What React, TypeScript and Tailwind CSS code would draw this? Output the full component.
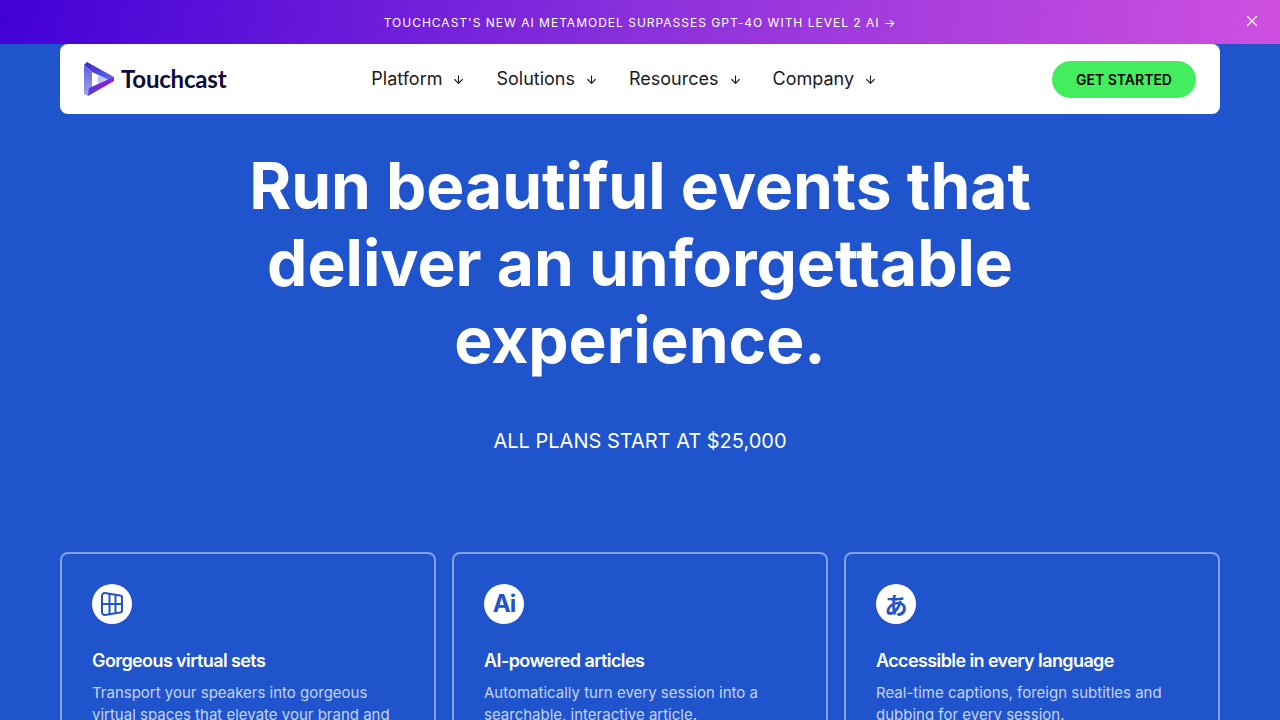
import { ArrowDown, X } from "lucide-react";

const NAV_ITEMS = ["Platform", "Solutions", "Resources", "Company"];

const CARDS = [
  {
    title: "Gorgeous virtual sets",
    body: "Transport your speakers into gorgeous virtual spaces that elevate your brand and",
    icon: (
      <svg width="22" height="24" viewBox="0 0 22 24" fill="none" stroke="#2054cc" strokeWidth="2" strokeLinejoin="round">
        <path d="M1 3.500a2.500 2.500 0 0 1 2.800-2.400l15.400 2.500a2 2 0 0 1 1.800 2v12.800a2 2 0 0 1-1.800 2L3.800 22.900A2.500 2.500 0 0 1 1 20.500z" />
        <path d="M1 12h20M8.500 2v20M14.500 3v18" />
      </svg>
    ),
  },
  {
    title: "AI-powered articles",
    body: "Automatically turn every session into a searchable, interactive article.",
    icon: <span className="text-[24px] leading-none font-bold tracking-[-1px] text-[#2054cc]">Ai</span>,
  },
  {
    title: "Accessible in every language",
    body: "Real-time captions, foreign subtitles and dubbing for every session.",
    icon: (
      <span className="font-['Noto_Sans_CJK_JP',sans-serif] text-[23px] leading-none font-bold text-[#2054cc]">あ</span>
    ),
  },
];

function Logo() {
  return (
    <div className="flex items-center gap-[6px]">
      <svg width="31" height="36" viewBox="0 0 31 36">
        <defs>
          <linearGradient id="left" x1="0" y1="0" x2="0" y2="1">
            <stop offset="0" stopColor="#5b5fe0" />
            <stop offset="1" stopColor="#a3a6f0" />
          </linearGradient>
          <linearGradient id="bottom" x1="0" y1="1" x2="1" y2="0">
            <stop offset="0" stopColor="#3f48d8" />
            <stop offset="0.6" stopColor="#8a1fdc" />
            <stop offset="1" stopColor="#7a2be0" />
          </linearGradient>
          <linearGradient id="top" x1="0" y1="0" x2="1" y2="1">
            <stop offset="0" stopColor="#3a22c4" />
            <stop offset="1" stopColor="#5c74ec" />
          </linearGradient>
        </defs>
        <path d="M0 4 3 1l27 15-3 4L8 11z" fill="url(#top)" />
        <path d="M0 4l8 7v18l-4 6-4-2z" fill="url(#left)" />
        <path d="M4 35l1-8 20-9 5-2v4z" fill="url(#bottom)" />
        <path d="M14 14l9 4-9 5z" fill="#b9c6f6" />
      </svg>
      <span className="font-['Lato',sans-serif] text-[24px] leading-none font-bold tracking-[-0.2px] text-[#0c0a3a]">
        Touchcast
      </span>
    </div>
  );
}

export default function App() {
  return (
    <div className="flex h-[720px] flex-col overflow-hidden bg-[#2054cc] font-['Inter',sans-serif] text-white">
      <div className="relative flex h-[44px] shrink-0 items-center justify-center bg-[linear-gradient(100deg,#4200d6,#8a30dc_50%,#cf50e0)]">
        <p className="pt-px text-xs tracking-[1px]">TOUCHCAST'S NEW AI METAMODEL SURPASSES GPT-4O WITH LEVEL 2 AI →</p>
        <X className="absolute top-[12px] right-[19px]" size={18} strokeWidth={1.75} />
      </div>

      <nav className="mx-[60px] flex h-[70px] shrink-0 items-center justify-between rounded-lg bg-white px-6">
        <Logo />
        <ul className="ml-[-30px] flex items-center gap-[31px] text-lg text-[#1a1a1f]">
          {NAV_ITEMS.map((item) => (
            <li key={item} className="flex items-center gap-[10px]">
              {item}
              <ArrowDown size={13} strokeWidth={2} />
            </li>
          ))}
        </ul>
        <button className="flex h-[37px] w-[144px] items-center justify-center rounded-full bg-[#43ee5e] pt-px text-sm font-semibold text-black">
          GET STARTED
        </button>
      </nav>

      <main className="flex flex-col items-center pt-[33px]">
        <h1 className="w-[900px] text-center text-[64px] leading-[77px] font-bold">
          Run beautiful events that deliver an unforgettable experience.
        </h1>
        <p className="mt-[49px] text-xl leading-7">ALL PLANS START AT $25,000</p>
      </main>

      <section className="mx-[60px] mt-[97px] grid grid-cols-3 gap-4">
        {CARDS.map((card) => (
          <article key={card.title} className="h-[300px] rounded-lg border-2 border-white/45 px-[30px] pt-[30px]">
            <div className="flex size-10 items-center justify-center rounded-full bg-white">{card.icon}</div>
            <h3 className="mt-[23px] text-lg leading-7 font-semibold tracking-[-0.6px]">{card.title}</h3>
            <p className="mt-[7px] text-[15px] leading-[22px] text-white/75">{card.body}</p>
          </article>
        ))}
      </section>
    </div>
  );
}
